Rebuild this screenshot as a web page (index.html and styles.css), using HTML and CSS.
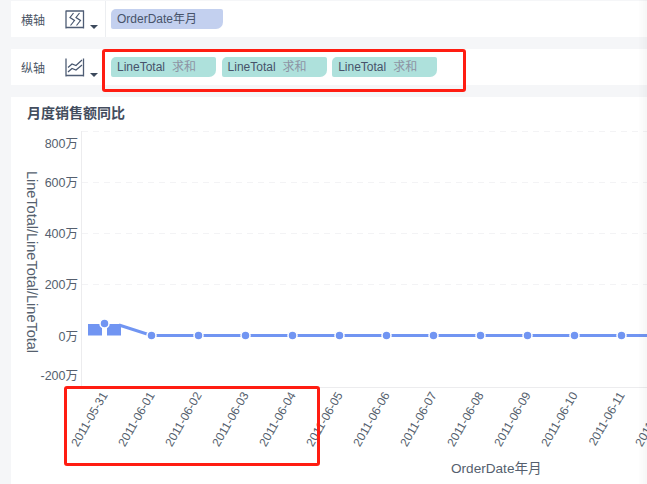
FILE: index.html
```html
<!DOCTYPE html>
<html lang="zh">
<head>
<meta charset="utf-8">
<title>月度销售额同比</title>
<link rel="stylesheet" href="styles.css">
</head>
<body>
<main class="page">
  <section class="shelf">
    <span class="shelf-label">横轴</span>
    <span class="shelf-icon">
      <svg width="20" height="19" viewBox="0 0 20 19"><path class="ic-frame" d="M1 .5V18.500M18.500 .5V18.500M1 1H19M1 17.500H19"/><path class="ic-line" d="M8.500 3 5 7.500 9.500 10.500 5.500 15.500M14.500 3 11 7.500 15.500 10.500 11.500 15.500"/></svg>
      <i class="caret"></i>
    </span>
    <div class="shelf-fields shelf-fields-first">
      <span class="chip chip-blue">OrderDate年月</span>
    </div>
  </section>
  <section class="shelf">
    <span class="shelf-label">纵轴</span>
    <span class="shelf-icon">
      <svg width="20" height="19" viewBox="0 0 20 19"><path class="ic-frame" d="M1 .5V18.500M18.500 .5V18.500M1 17.500H19"/><path class="ic-line" d="M3 9.500 7 6 11 7.500 17 2M3 14 7 10.500 11 12 17 7"/></svg>
      <i class="caret"></i>
    </span>
    <div class="shelf-fields">
      <span class="chip chip-teal">LineTotal<em>求和</em></span>
      <span class="chip chip-teal">LineTotal<em>求和</em></span>
      <span class="chip chip-teal">LineTotal<em>求和</em></span>
    </div>
    <div class="mark mark-fields"></div>
  </section>
  <section class="card">
    <h2 class="card-title">月度销售额同比</h2>
    <svg class="chart" width="636" height="353" viewBox="11 131 636 353">
      <g class="grid">
        <path d="M82 131.500H647M82 182.500H647M82 233.500H647M82 284.500H647"/>
      </g>
      <path class="base" d="M81.500 131V387M82 387.500H647"/>
      <g class="ytick">
        <text x="78" y="148">800万</text>
        <text x="78" y="187">600万</text>
        <text x="78" y="238">400万</text>
        <text x="78" y="289">200万</text>
        <text x="78" y="341">0万</text>
        <text x="78" y="380">-200万</text>
      </g>
      <text class="ytitle" transform="translate(27 262) rotate(90)">LineTotal/LineTotal/LineTotal</text>
      <g class="series">
        <path class="series-line" d="M119 325 151.500 335.500 H647"/>
        <rect x="88" y="324" width="14" height="11.500"/>
        <rect x="107" y="324" width="14" height="11.500"/>
        <circle cx="104.500" cy="323.500" r="4.500"/>
        <circle cx="151.500" cy="335.500" r="4.500"/>
        <circle cx="198.500" cy="335.500" r="4.500"/>
        <circle cx="245.500" cy="335.500" r="4.500"/>
        <circle cx="292.500" cy="335.500" r="4.500"/>
        <circle cx="339.500" cy="335.500" r="4.500"/>
        <circle cx="386.500" cy="335.500" r="4.500"/>
        <circle cx="433.500" cy="335.500" r="4.500"/>
        <circle cx="480.500" cy="335.500" r="4.500"/>
        <circle cx="527.500" cy="335.500" r="4.500"/>
        <circle cx="574.500" cy="335.500" r="4.500"/>
        <circle cx="621.500" cy="335.500" r="4.500"/>
      </g>
      <g class="xtick">
        <text transform="translate(108 395) rotate(-60)">2011-05-31</text>
        <text transform="translate(155 395) rotate(-60)">2011-06-01</text>
        <text transform="translate(202 395) rotate(-60)">2011-06-02</text>
        <text transform="translate(249 395) rotate(-60)">2011-06-03</text>
        <text transform="translate(296 395) rotate(-60)">2011-06-04</text>
        <text transform="translate(343 395) rotate(-60)">2011-06-05</text>
        <text transform="translate(390 395) rotate(-60)">2011-06-06</text>
        <text transform="translate(437 395) rotate(-60)">2011-06-07</text>
        <text transform="translate(484 395) rotate(-60)">2011-06-08</text>
        <text transform="translate(531 395) rotate(-60)">2011-06-09</text>
        <text transform="translate(578 395) rotate(-60)">2011-06-10</text>
        <text transform="translate(625 395) rotate(-60)">2011-06-11</text>
        <text transform="translate(672 395) rotate(-60)">2011-06-12</text>
      </g>
      <text class="xtitle" x="451" y="473">OrderDate年月</text>
    </svg>
    <div class="mark mark-ticks"></div>
  </section>
</main>
</body>
</html>
```
FILE: styles.css
```css
* { box-sizing: border-box; }
html, body { margin: 0; height: 100%; overflow: hidden; }
body {
  background: #f5f6f8;
  font-family: "Liberation Sans", "Noto Sans CJK SC", sans-serif;
  font-size: 12px;
  color: #4b5565;
}
.page {
  padding: 1px 0 0 11px;
  display: flex;
  flex-direction: column;
  gap: 12px;
}
.page::after {
  content: "";
  position: fixed;
  top: 0;
  right: 0;
  bottom: 0;
  width: 9px;
  background: linear-gradient(to right, rgba(0, 0, 0, 0), rgba(0, 0, 0, 0.035));
  pointer-events: none;
}
.shelf {
  position: relative;
  height: 36px;
  background: #fff;
  display: flex;
  align-items: center;
}
.shelf-label {
  width: 54px;
  padding-left: 10px;
  color: #4b5565;
}
.shelf-icon {
  width: 40px;
  display: flex;
  align-items: flex-start;
  gap: 5px;
}
.shelf-icon svg { display: block; }
.ic-frame { fill: none; stroke: #4f5d75; stroke-width: 1.300; }
.ic-line { fill: none; stroke: #46556e; stroke-width: 1.200; }
.caret {
  width: 0;
  height: 0;
  margin-top: 15px;
  border-left: 4px solid transparent;
  border-right: 4px solid transparent;
  border-top: 4px solid #3d4a5c;
}
.shelf-fields {
  height: 36px;
  flex: 1;
  display: flex;
  gap: 5.500px;
  padding: 8px 0 0 5px;
  border-left: 1px solid transparent;
}
.shelf-fields-first { border-left-color: #eceef1; }
.chip {
  height: 20px;
  line-height: 20px;
  padding: 0 20px 0 6px;
  border-radius: 5px 2px 7px 2px;
  color: #47536a;
  white-space: nowrap;
}
.chip-blue { background: #c3d0ef; padding-right: 26px; }
.chip-teal { background: #aee1dc; }
.chip em { font-style: normal; color: #8d93a3; margin-left: 7px; }
.mark {
  position: absolute;
  border: 3px solid #ff1d12;
  border-radius: 3px;
  pointer-events: none;
}
.mark-fields { left: 91px; top: 0; width: 364px; height: 43px; }
.mark-ticks { left: 53px; top: 289px; width: 256px; height: 80px; }
.card {
  position: relative;
  height: 387px;
  background: #fff;
  overflow: hidden;
}
.card-title {
  margin: 0;
  padding: 7px 0 0 16px;
  height: 34px;
  font-size: 14px;
  line-height: 18px;
  font-weight: 700;
  color: #434d5e;
}
.chart { display: block; }
.grid path { fill: none; stroke: #f3f3f5; stroke-dasharray: 6 5; }
.base { fill: none; stroke: #ececee; }
.ytick text { font-size: 12.500px; fill: #555f6e; text-anchor: end; }
.ytitle { font-size: 14.500px; fill: #555f6e; text-anchor: middle; }
.xtick text { font-size: 12px; fill: #555f6e; text-anchor: end; }
.xtitle { font-size: 13.600px; fill: #555f6e; }
.series rect, .series circle { fill: #7195f2; }
.series circle { stroke: #fff; stroke-width: 1.500; }
.series-line { fill: none; stroke: #7195f2; stroke-width: 3; }
```
